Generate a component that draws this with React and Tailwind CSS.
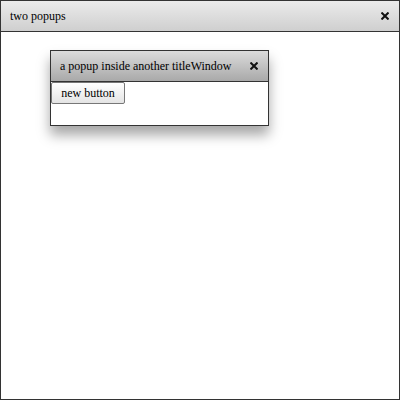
const CloseX = () => (
  <svg width="8" height="8" viewBox="0 0 8 8" className="block">
    <path d="M1.2 1.2 L6.8 6.8 M6.8 1.2 L1.2 6.8" stroke="#111" strokeWidth="2" strokeLinecap="square" />
  </svg>
);

export default function App() {
  return (
    <div className="w-[400px] h-[400px] bg-white border border-[#333] flex flex-col font-['Liberation_Serif',serif] text-[12px] text-black">
      {/* Main window title */}
      <div className="h-[31px] shrink-0 flex items-center justify-between pl-[9px] pr-[10px] border-b border-[#333] bg-gradient-to-b from-[#ebebeb] to-[#cfcfcf]">
        <span>two popups</span>
        <CloseX />
      </div>

      <div className="relative flex-1">
        {/* Nested popup */}
        <div className="absolute left-[49px] top-[18px] w-[219px] h-[76px] bg-white border border-[#333] shadow-[0_9px_12px_rgba(0,0,0,0.35)] flex flex-col">
          <div className="h-[31px] shrink-0 flex items-center justify-between pl-[9px] pr-[10px] border-b border-[#333] bg-gradient-to-b from-[#dcdcdc] to-[#a9a9a9]">
            <span>a popup inside another titleWindow</span>
            <CloseX />
          </div>
          <div className="flex items-start">
            <button className="w-[74px] h-[22px] border border-[#777] rounded-[2px] bg-gradient-to-b from-[#ffffff] to-[#e4e4e4] text-[12px] leading-none">
              new button
            </button>
          </div>
        </div>
      </div>
    </div>
  );
}
